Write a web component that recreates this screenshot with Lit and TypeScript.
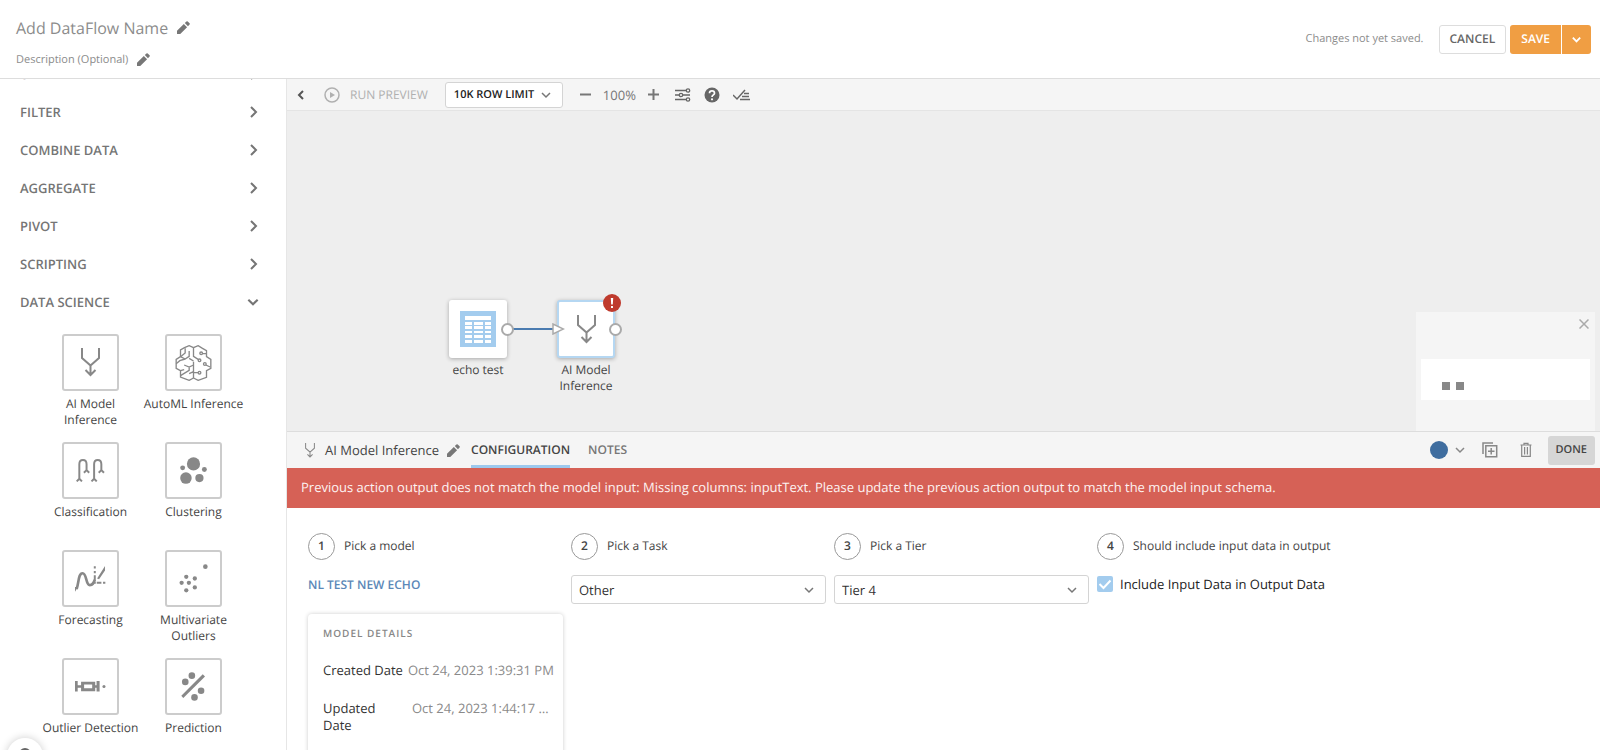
import { LitElement, html, css, svg, nothing, TemplateResult } from "lit";
import { customElement, state } from "lit/decorators.js";

const pencil = html`<svg viewBox="0 0 12 12" width="13" height="13" aria-hidden="true">
  <path fill="currentColor" d="M0 9V12H3L9.300 5.700 6.300 2.700zM11.600 3.300a.9.9 0 0 0 0-1.200L9.900.4a.9.9 0 0 0-1.200 0L7.200 1.900 10.100 4.800z" />
</svg>`;

const chevron = (dir: "left" | "right" | "down", size: number, weight = 2) => {
  const d = { left: "M8 2 4 6 8 10", right: "M3 1 8 6 3 11", down: "M2 4 6 8 10 4" }[dir];
  return html`<svg viewBox="0 0 12 12" width=${size} height=${size} aria-hidden="true">
    <path d=${d} fill="none" stroke="currentColor" stroke-width=${weight} />
  </svg>`;
};

const merge = svg`<path d="M1 0V10L9.500 17.500V27M18 0V10L9.500 17.500M4.500 22 9.500 27 14.500 22" />`;

const mergeIcon = (w: number, h: number, weight: number) => html`
  <svg class="line" viewBox="0 0 19 29" width=${w} height=${h} stroke-width=${weight} aria-hidden="true">${merge}</svg>`;

const icons: Record<string, TemplateResult> = {
  merge: mergeIcon(19, 29, 2),
  brain: html`<svg class="line" viewBox="0 0 110 108" width="37" height="36" stroke-width="4" aria-hidden="true">
    <path d="M55 8 42 2 28 8 16 15V35L3 43V70L16 77V96L42 106 55 99M55 8 69 2 82 10 94 17V35L107 43V70L94 77V97L69 106 55 99" />
    <path d="M55 8V34L69 43M55 50V99M30 10V24L18 34M42 18V34L30 42 16 35M3 56 14 47 30 42M55 48 42 40M55 60 42 66 27 60M42 66V76L16 92M27 74 16 77M42 86 55 80" />
    <path d="M82 26H94M92 60 105 66M55 83H69" />
    <circle cx="73" cy="46" r="4" /><circle cx="78" cy="25" r="4" /><circle cx="89" cy="57" r="4" /><circle cx="73" cy="83" r="4" />
  </svg>`,
  classes: html`<svg class="line" viewBox="0 0 88 70" width="29" height="23" stroke-width="6" aria-hidden="true">
    <path d="M10 62V16Q10 3 21 3T32 16V38M2 68 10 60 18 68M24 42 32 34 40 42" />
    <path d="M55 62V16Q55 3 66 3T77 16V38M47 68 55 60 63 68M69 42 77 34 85 42" />
  </svg>`,
  cluster: html`<svg class="fill" viewBox="0 0 82 82" width="27" height="27" aria-hidden="true">
    <circle cx="41" cy="21" r="20" /><circle cx="8" cy="33" r="7.500" /><circle cx="74" cy="38" r="7.500" />
    <circle cx="18" cy="64" r="17.500" /><circle cx="59" cy="64" r="12.500" />
  </svg>`,
  forecast: html`<svg class="fill" viewBox="0 0 94 80" width="31" height="27" aria-hidden="true">
    <path fill="none" stroke="currentColor" stroke-width="8" d="M5 72C12 52 10 24 23 24S32 60 45 60C54 60 56 54 60 44" />
    <path d="M67 40 91 2V16L73 42zM0 66V80L9 66zM57 3h6v7h-6zM57 17h6v7h-6zM57 30h6v16h-6zM57 50h6v6h-6zM66 50h14v6H66zM85 50h7v6h-7z" />
  </svg>`,
  multi: html`<svg class="fill" viewBox="0 0 88 88" width="29" height="29" aria-hidden="true">
    <circle cx="80" cy="8" r="7" /><circle cx="22" cy="39" r="6.500" /><circle cx="48" cy="44" r="6.500" />
    <circle cx="8" cy="57" r="6.500" /><circle cx="30" cy="57" r="6.500" /><circle cx="48" cy="71" r="6.500" /><circle cx="22" cy="80" r="6.500" />
  </svg>`,
  outlier: html`<svg class="fill" viewBox="0 0 92 32" width="31" height="11" aria-hidden="true">
    <path d="M0 0H8V12H18V2H60V12H64V0H73V31H64V20H60V30H18V20H8V31H0zM27 10V21H51V10z" fill-rule="evenodd" />
    <circle cx="86" cy="16" r="4.500" />
  </svg>`,
  predict: html`<svg class="fill" viewBox="0 0 74 88" width="25" height="29" aria-hidden="true">
    <path d="M0 72 65 7 72 14 6 79z" /><circle cx="32" cy="11" r="10" /><circle cx="12" cy="30" r="10" />
    <circle cx="60" cy="57" r="10" /><circle cx="40" cy="77" r="10" />
  </svg>`,
};

const tableIcon = html`<svg viewBox="0 0 36 36" width="36" height="36" aria-hidden="true">
  <path fill="#a3ccee" d="M0 0H36V36H0z" />
  <path fill="#fff" d="M5 5H31V9H5zM5 11h7v3H5zM14 11h9v3H14zM25 11h6v3H25zM5 15h7v3H5zM14 15h9v3H14zM25 15h6v3H25zM5 20h7v2H5zM14 20h9v2H14zM25 20h6v2H25zM5 24h7v3H5zM14 24h9v3H14zM25 24h6v3H25zM5 29h7v3H5zM14 29h9v3H14zM25 29h6v3H25z" />
</svg>`;

const categories = ["UTILITY", "FILTER", "COMBINE DATA", "AGGREGATE", "PIVOT", "SCRIPTING", "DATA SCIENCE"];

const tiles: [string, string][] = [
  ["merge", "AI Model Inference"],
  ["brain", "AutoML Inference"],
  ["classes", "Classification"],
  ["cluster", "Clustering"],
  ["forecast", "Forecasting"],
  ["multi", "Multivariate Outliers"],
  ["outlier", "Outlier Detection"],
  ["predict", "Prediction"],
];

@customElement("app-root")
export class AppRoot extends LitElement {
  @state() private open = "DATA SCIENCE";

  static styles = css`
    :host {
      display: flex;
      flex-direction: column;
      height: 100vh;
      overflow: hidden;
      background: #fff;
      color: #444;
      font-family: "Open Sans", "Noto Sans", sans-serif;
      font-size: 13px;
      line-height: 16px;
      text-rendering: geometricPrecision;
    }
    * { box-sizing: border-box; }
    svg { display: block; flex: none; }
    h1, h2, p, dl, dd { margin: 0; padding: 0; font-weight: 400; }
    h2 { font-size: 12px; }
    button, select { font: inherit; color: inherit; background: none; border: 0; padding: 0; margin: 0; cursor: pointer; text-rendering: inherit; }
    a { text-decoration: none; }
    .line { fill: none; stroke: currentColor; }
    .fill { fill: currentColor; }
    .grow { flex: 1; }

    .top {
      display: flex;
      align-items: center;
      gap: 4px;
      flex: none;
      height: 79px;
      padding: 0 9px 0 16px;
      border-bottom: 1px solid #ddd;
    }
    .names { flex: 1; display: grid; gap: 12px; padding-top: 5px; color: #8c8c8c; }
    .named { display: flex; align-items: center; gap: 9px; }
    .title { font-size: 16px; line-height: 24px; }
    .desc { font-size: 11px; line-height: 16px; }
    .edit { color: #777; }
    .unsaved { font-size: 11px; color: #8c8c8c; margin-right: 11px; }
    .btn {
      height: 29px;
      padding: 0 10px;
      border-radius: 3px;
      font-size: 12px;
      font-weight: 600;
    }
    .cancel { border: 1px solid #ddd; color: #666; }
    .split { display: flex; gap: 1px; color: #fff; }
    .save { background: #f09e43; border-radius: 3px 0 0 3px; padding: 0 11px; }
    .more { background: #f09e43; border-radius: 0 3px 3px 0; padding: 0 9px; }

    .body { flex: 1; min-height: 0; display: flex; }
    .side {
      position: relative;
      flex: 0 0 287px;
      overflow: hidden;
      border-right: 1px solid #e6e6e6;
    }
    .cats { margin-top: -24px; }
    .cat {
      display: flex;
      align-items: center;
      justify-content: space-between;
      width: 100%;
      height: 38px;
      padding: 0 26px 0 20px;
      font-weight: 600;
      color: #757575;
    }
    .tiles {
      display: grid;
      grid-template-columns: 103px 103px;
      grid-auto-rows: 108px;
      padding: 13px 0 0 39px;
      color: #444;
      font-size: 12px;
    }
    .tile { display: flex; flex-direction: column; align-items: center; gap: 5px; }
    .tileLabel { text-align: center; }
    .narrow { width: 80px; }
    .box {
      display: grid;
      place-items: center;
      width: 57px;
      height: 57px;
      border: 2px solid #ccc;
      border-radius: 3px;
      color: #888;
    }
    .help {
      position: absolute;
      left: 7px;
      bottom: -24px;
      width: 36px;
      height: 36px;
      border-radius: 50%;
      background: #fff;
      box-shadow: 0 0 8px rgba(0, 0, 0, 0.2);
      color: #666;
      display: flex;
      justify-content: center;
      padding-top: 10px;
    }

    .main { flex: 1; min-width: 0; display: flex; flex-direction: column; }
    .tools {
      display: flex;
      align-items: center;
      flex: none;
      height: 32px;
      padding-left: 8px;
      gap: 12px;
      background: #f5f5f5;
      border-bottom: 1px solid #e4e4e4;
      color: #555;
    }
    .run { display: flex; align-items: center; gap: 10px; font-size: 12px; font-weight: 500; color: #b0b0b0; margin: 0 5px; }
    .pick { display: grid; align-items: center; }
    .pick > * { grid-area: 1 / 1; }
    .pick > svg { justify-self: end; margin-right: 11px; pointer-events: none; color: #777; }
    .native { appearance: none; width: 100%; border: 1px solid #d4d4d4; border-radius: 3px; background: #fff; color: #333; }
    .limit { width: 118px; height: 26px; padding-left: 8px; font-size: 11px; font-weight: 600; color: #222; }
    .zoom { display: flex; align-items: center; gap: 11px; color: #777; margin: 0 3px 0 4px; }
    .icons { display: flex; align-items: center; gap: 13px; color: #666; }

    .canvas { position: relative; flex: 0 0 320px; background: #eee; overflow: hidden; }
    .wire { position: absolute; left: 226px; top: 217px; width: 40px; height: 2px; background: #4a7bb0; }
    .node { position: absolute; top: 189px; width: 58px; display: grid; justify-items: center; gap: 4px; font-size: 12px; text-align: center; }
    .n1 { left: 162px; }
    .n2 { left: 270px; }
    .card { display: grid; place-items: center; width: 58px; height: 58px; border-radius: 3px; background: #fff; box-shadow: 0 1px 4px rgba(0, 0, 0, 0.3); color: #888; }
    .sel { border: 2px solid #b5d7f2; }
    .port { position: absolute; right: -7px; top: 23px; width: 13px; height: 13px; border: 2px solid #aaa; border-radius: 50%; background: #fff; }
    .inlet { position: absolute; left: -5px; top: 23px; }
    .bad { position: absolute; right: -6px; top: -6px; }
    .mini { position: absolute; right: 5px; bottom: 0; width: 179px; height: 119px; padding: 7px 5px; background: #f5f5f5; display: flex; flex-direction: column; gap: 30px; }
    .close { align-self: flex-end; color: #aaa; margin-right: 1px; }
    .view { height: 41px; background: #fff; display: flex; gap: 6px; padding: 23px 0 0 21px; }
    .dot { width: 8px; height: 8px; background: #888; }

    .panel { flex: 1; min-height: 0; overflow: hidden; background: #fff; }
    .bar { display: flex; align-items: center; height: 37px; padding: 0 5px 0 18px; background: #f5f5f5; border-top: 1px solid #ddd; }
    .actName { display: flex; align-items: center; gap: 8px; margin-right: 11px; color: #444; }
    .actName > .line { color: #888; margin-right: 2px; }
    .tabs { display: flex; align-self: stretch; gap: 18px; }
    .tab { font-size: 12px; font-weight: 600; color: #777; border-bottom: 3px solid transparent; padding-top: 3px; }
    .tabOn { color: #444; border-color: #9dc9ee; }
    .acts { display: flex; align-items: center; gap: 16px; color: #888; }
    .color { display: flex; align-items: center; gap: 6px; }
    .copy { margin-right: 6px; }
    .swatch { width: 18px; height: 18px; border-radius: 50%; background: #3f6d9f; }
    .done { background: #d6d6d6; color: #444; font-size: 11px; padding: 0 8px; }
    .alert { height: 40px; padding: 0 14px; line-height: 39px; background: #d66156; color: #fdf3f2; }

    .steps { display: grid; grid-template-columns: repeat(3, 255px) 1fr; column-gap: 8px; padding: 24px 21px 0; color: #333; }
    .step { display: flex; align-items: center; gap: 9px; font-size: 12px; height: 28px; color: #444; }
    .num { width: 27px; height: 27px; border: 1px solid #999; border-radius: 50%; display: grid; place-items: center; font-weight: 600; }
    .field { height: 29px; padding-left: 7px; }
    .control { margin-top: 15px; }
    .model { display: block; width: max-content; margin-top: 17px; font-size: 12px; font-weight: 600; color: #5b88b8; }
    .details { margin-top: 21px; padding: 11px 8px 40px 15px; border-radius: 4px; box-shadow: 0 0 4px rgba(0, 0, 0, 0.2); }
    .dhead { font-size: 10px; font-weight: 600; letter-spacing: 1px; color: #888; }
    .row { display: flex; gap: 5px; margin-top: 21px; line-height: 17px; }
    .key { flex: none; }
    .wrap { width: 84px; padding-right: 20px; }
    .val { flex: 1; min-width: 0; color: #8a8a8a; white-space: nowrap; overflow: hidden; text-overflow: ellipsis; }
    .check { display: flex; align-items: center; gap: 7px; margin-top: 16px; color: #222; }
    .tick { appearance: none; margin: 0; width: 16px; height: 16px; border-radius: 2px; background: #a3ccee; }
    .tickWrap { display: grid; }
    .tickWrap > * { grid-area: 1 / 1; }
    .tickWrap > svg { pointer-events: none; stroke: #fff; }
  `;

  private step(n: number, text: string, body: TemplateResult) {
    return html`<section>
      <div class="step"><span class="num">${n}</span><h2>${text}</h2></div>
      ${body}
    </section>`;
  }

  private field(label: string, value: string) {
    return html`<div class="pick control">
      <select class="native field" aria-label=${label}><option>${value}</option></select>${chevron("down", 12, 1.5)}
    </div>`;
  }

  render() {
    return html`
      <header class="top">
        <div class="names">
          <div class="named"><h1 class="title">Add DataFlow Name</h1><button class="edit" aria-label="Edit name">${pencil}</button></div>
          <div class="named"><p class="desc">Description (Optional)</p><button class="edit" aria-label="Edit description">${pencil}</button></div>
        </div>
        <span class="unsaved">Changes not yet saved.</span>
        <button class="btn cancel">CANCEL</button>
        <div class="split">
          <button class="btn save">SAVE</button>
          <button class="btn more" aria-label="Save options">${chevron("down", 11)}</button>
        </div>
      </header>
      <div class="body">
        <aside class="side">
          <nav class="cats">
            ${categories.map(
              (c) => html`<button class="cat" @click=${() => (this.open = c)}>
                ${c}${this.open === c ? chevron("down", 14, 1.8) : chevron("right", 12, 2)}
              </button>`
            )}
          </nav>
          ${this.open === "DATA SCIENCE"
            ? html`<div class="tiles">
                ${tiles.map(
                  ([icon, name]) => html`<div class="tile">
                    <button class="box" aria-label=${name}>${icons[icon]}</button>
                    <span class="tileLabel ${/Model|Multi/.test(name) ? "narrow" : ""}">${name}</span>
                  </div>`
                )}
              </div>`
            : nothing}
          <button class="help" aria-label="Help">
            <svg class="line" viewBox="0 0 12 12" width="12" height="12" stroke-width="2"><path d="M1 6a5 5 0 0 1 10 0" /></svg>
          </button>
        </aside>
        <main class="main">
          <div class="tools">
            <button aria-label="Collapse">${chevron("left", 12)}</button>
            <button class="run" disabled>
              <svg viewBox="0 0 16 16" width="16" height="16"><circle cx="8" cy="8" r="7" fill="none" stroke="currentColor" stroke-width="1.500" /><path d="M6 5 11 8 6 11z" fill="currentColor" /></svg>
              RUN PREVIEW
            </button>
            <div class="pick">
              <select class="native limit" aria-label="Row limit"><option>10K ROW LIMIT</option></select>${chevron("down", 12, 1.5)}
            </div>
            <div class="zoom">
              <button aria-label="Zoom out"><svg class="line" viewBox="0 0 13 13" width="13" height="13" stroke-width="2"><path d="M1 6.500H12" /></svg></button>
              <span>100%</span>
              <button aria-label="Zoom in"><svg class="line" viewBox="0 0 13 13" width="13" height="13" stroke-width="2"><path d="M1 6.500H12M6.500 1V12" /></svg></button>
            </div>
            <div class="icons">
              <button aria-label="Settings">
                <svg class="line" viewBox="0 0 16 14" width="16" height="14" stroke-width="1.300"><path d="M0 2.500H11M0 7H4M8 7H15M0 11.500H11" /><circle cx="13" cy="2.500" r="1.700" /><circle cx="6" cy="7" r="1.700" /><circle cx="13" cy="11.500" r="1.700" /></svg>
              </button>
              <button aria-label="Help">
                <svg viewBox="0 0 16 16" width="16" height="16"><circle cx="8" cy="8" r="7.500" fill="currentColor" /><path d="M5.500 6.200C5.500 3.200 10.500 3.200 10.500 6.200 10.500 7.800 8 8 8 10" fill="none" stroke="#fff" stroke-width="1.700" /><circle cx="8" cy="12.300" r="1.100" fill="#fff" /></svg>
              </button>
              <button aria-label="Validate">
                <svg class="line" viewBox="0 0 17 12" width="17" height="12" stroke-width="1.500"><path d="M0 6 4 10 12 1M11 4.500H16M9 7.500H16M7 10.500H17" /></svg>
              </button>
            </div>
          </div>
          <div class="canvas">
            <div class="wire"></div>
            <div class="node n1"><div class="card">${tableIcon}</div><span>echo test</span><i class="port"></i></div>
            <div class="node n2">
              <div class="card sel">${icons.merge}</div><span>AI Model Inference</span><i class="port"></i>
              <svg class="inlet" viewBox="0 0 13 12" width="13" height="12"><path d="M1 1V11L11.500 6z" fill="#fff" stroke="#aaa" stroke-width="1.500" /></svg>
              <svg class="bad" viewBox="0 0 18 18" width="18" height="18"><circle cx="9" cy="9" r="9" fill="#bf3a2d" /><path d="M7.800 4H10.200L9.800 10.500H8.200zM8 12H10V14H8z" fill="#fff" /></svg>
            </div>
            <div class="mini">
              <button class="close" aria-label="Close map"><svg class="line" viewBox="0 0 10 10" width="10" height="10" stroke-width="1.500"><path d="M.5.5 9.500 9.500M9.500.5.5 9.500" /></svg></button>
              <div class="view"><i class="dot"></i><i class="dot"></i></div>
            </div>
          </div>
          <div class="panel">
            <div class="bar">
              <div class="actName">${mergeIcon(10, 15, 2)}<span>AI Model Inference</span><button class="edit" aria-label="Rename">${pencil}</button></div>
              <div class="tabs"><button class="tab tabOn">CONFIGURATION</button><button class="tab">NOTES</button></div>
              <div class="grow"></div>
              <div class="acts">
                <button class="color" aria-label="Color"><i class="swatch"></i>${chevron("down", 12, 1.5)}</button>
                <button class="copy" aria-label="Duplicate"><svg class="line" viewBox="0 0 16 16" width="16" height="16" stroke-width="1.500"><path d="M1 12V1H11M3.800 3.800H14.700V14.700H3.800zM9.200 6V12.500M6 9.300H12.500" /></svg></button>
                <button aria-label="Delete"><svg class="line" viewBox="0 0 12 16" width="12" height="16" stroke-width="1.200"><path d="M.5 3H11.500M4 3V1.300H8V3M1.700 3V14.300H10.300V3M4.600 5V12.500M7.400 5V12.500" /></svg></button>
                <button class="btn done">DONE</button>
              </div>
            </div>
            <p class="alert" role="alert">Previous action output does not match the model input: Missing columns: inputText. Please update the previous action output to match the model input schema.</p>
            <div class="steps">
              ${this.step(1, "Pick a model", html`
                <a class="model" href="#model">NL TEST NEW ECHO</a>
                <div class="details">
                  <h2 class="dhead">MODEL DETAILS</h2>
                  <dl>
                    <div class="row"><dt class="key">Created Date</dt><dd class="val">Oct 24, 2023 1:39:31 PM</dd></div>
                    <div class="row"><dt class="key wrap">Updated Date</dt><dd class="val">Oct 24, 2023 1:44:17 PM</dd></div>
                  </dl>
                </div>`)}
              ${this.step(2, "Pick a Task", this.field("Task", "Other"))}
              ${this.step(3, "Pick a Tier", this.field("Tier", "Tier 4"))}
              ${this.step(4, "Should include input data in output", html`
                <label class="check">
                  <span class="tickWrap"><input class="tick" type="checkbox" checked /><svg class="line" viewBox="0 0 16 16" width="16" height="16" stroke-width="2"><path d="M2.500 8 6.500 12 13.500 4.500" /></svg></span>
                  Include Input Data in Output Data
                </label>`)}
            </div>
          </div>
        </main>
      </div>
    `;
  }
}
